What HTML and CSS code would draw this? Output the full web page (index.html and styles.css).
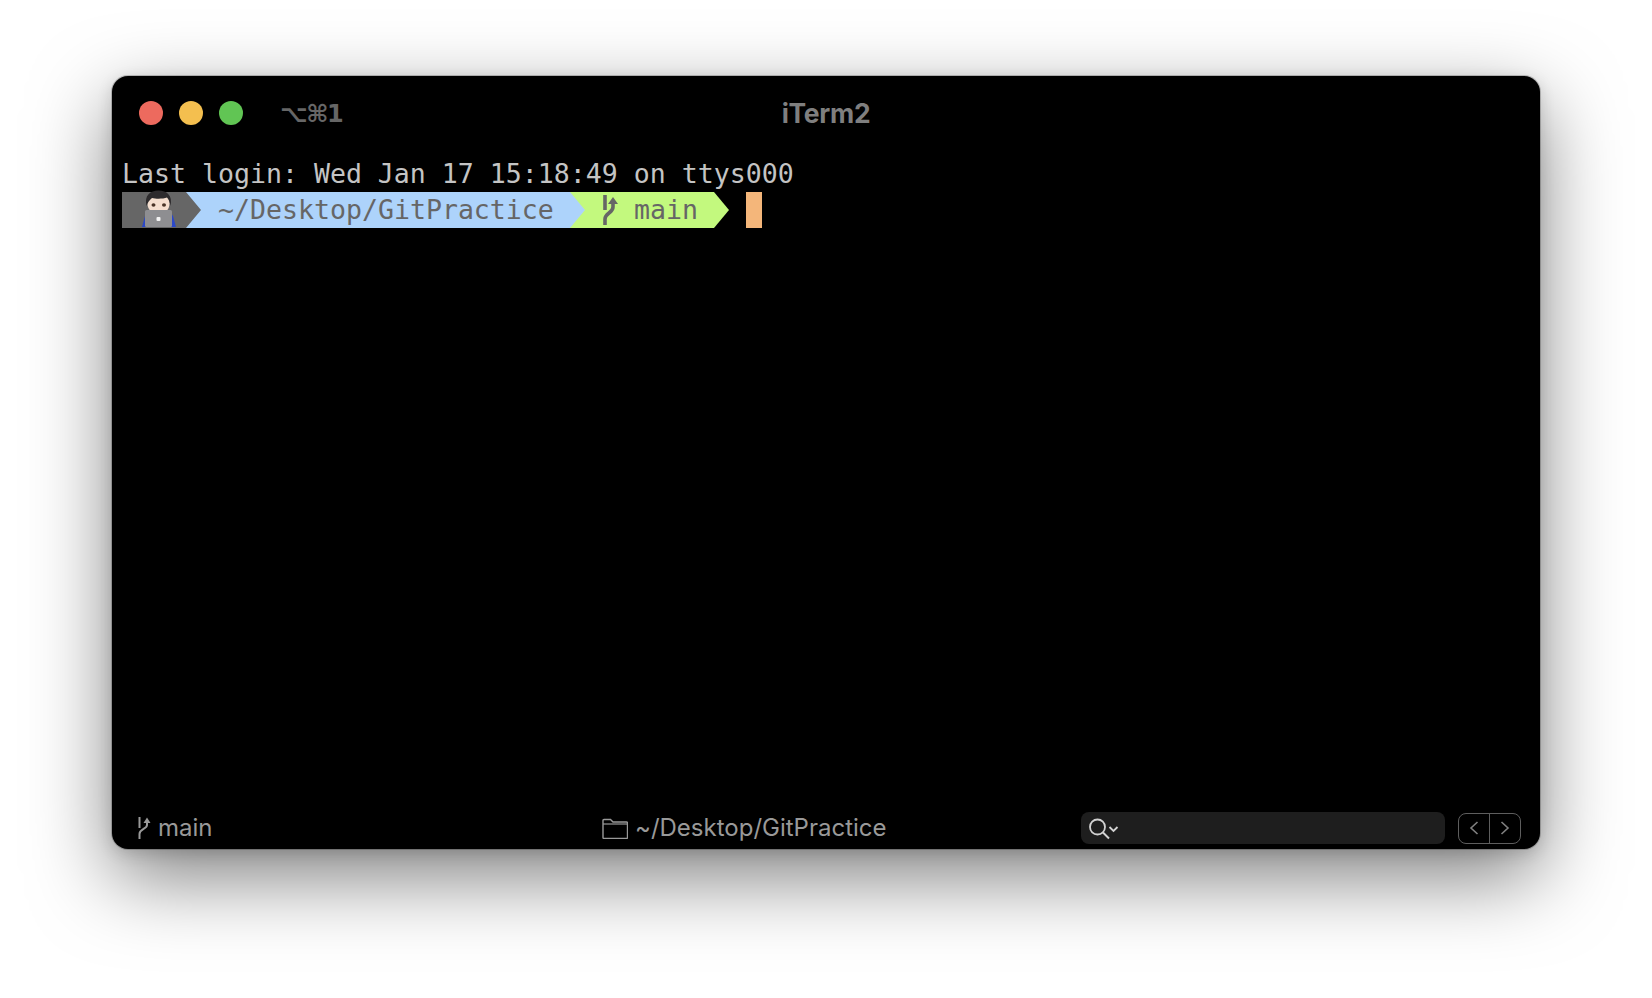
FILE: index.html
```html
<!DOCTYPE html>
<html lang="en">
<head>
<meta charset="utf-8">
<title>iTerm2</title>
<link rel="stylesheet" href="styles.css">
</head>
<body>
<main class="window">
  <header class="titlebar">
    <div class="lights"><span class="light red"></span><span class="light yellow"></span><span class="light green"></span></div>
    <span class="shortcut">⌥⌘1</span>
    <span class="title">iTerm2</span>
  </header>
  <section class="terminal">
    <div class="line">Last login: Wed Jan 17 15:18:49 on ttys000</div>
    <div class="prompt">
      <div class="seg seg-user">
        <svg class="avatar" width="38" height="38" viewBox="0 0 38 38">
          <path d="M2 37l3-11 4-6h20l4 6 3 11z" fill="#2b48c8"/>
          <path d="M9 22h20v6H9z" fill="#4a4a4c"/>
          <ellipse cx="18.500" cy="13.500" rx="11" ry="11" fill="#f5dfcf"/>
          <path d="M6.500 16C4 5 10.500 .5 18.500 .5S33 5 30.500 16c-.5-3.500-1.500-6.500-3.500-8.500-4 1.500-11 1.500-15 .5-2 1.500-4.500 4.500-5.500 8z" fill="#2d2b2d"/>
          <ellipse cx="13.500" cy="15" rx="2" ry="1.800" fill="#4a3528"/>
          <ellipse cx="24" cy="15" rx="2" ry="1.800" fill="#4a3528"/>
          <rect x="5" y="20" width="27" height="17" rx="1.500" fill="#8e8e91"/>
          <rect x="16.500" y="27" width="4" height="4" rx="1" fill="#f4f4f4"/>
        </svg>
      </div>
      <div class="seg seg-path">~/Desktop/GitPractice</div>
      <div class="seg seg-git">
        <svg class="branch" width="16" height="32" viewBox="0 0 16 32">
          <path d="M3 1v15M11 9v4c0 6-8 6-8 12v6" fill="none" stroke="#666" stroke-width="3.600"/>
          <path d="M11 3l5 7H6z" fill="#666"/>
        </svg>
        <span>main</span>
      </div>
      <span class="cursor"></span>
    </div>
  </section>
  <footer class="status">
    <div class="status-branch">
      <svg width="15" height="24" viewBox="0 0 15 24">
        <path d="M2.500 1v11M10 6v3c0 4-7.500 4-7.500 9v5" fill="none" stroke="#999" stroke-width="2"/>
        <path d="M10 1.500l3.500 5.500h-7z" fill="#999"/>
      </svg>
      <span>main</span>
    </div>
    <div class="status-path">
      <svg width="26" height="21" viewBox="0 0 26 21">
        <path d="M1 19.500V2.500q0-1 1-1h6.500l2.500 2.500h13.500q1 0 1 1v14.500q0 1-1 1H2q-1 0-1-1z" fill="none" stroke="#999" stroke-width="1.400"/>
        <path d="M1 6h24.500" stroke="#999" stroke-width="1.200"/>
      </svg>
      <span>~/Desktop/GitPractice</span>
    </div>
    <div class="search">
      <svg width="34" height="24" viewBox="0 0 34 24">
        <circle cx="9.500" cy="10" r="7.500" fill="none" stroke="#d2d2d2" stroke-width="1.800"/>
        <path d="M15 15.500l6 6" stroke="#d2d2d2" stroke-width="2"/>
        <path d="M21.500 10l4 4 4-4" fill="none" stroke="#d2d2d2" stroke-width="1.800"/>
      </svg>
    </div>
    <div class="nav">
      <span class="nav-btn"><svg width="12" height="16" viewBox="0 0 12 16"><path d="M9.500 2L3 8l6.500 6" fill="none" stroke="#808080" stroke-width="1.600"/></svg></span>
      <span class="nav-btn divided"><svg width="12" height="16" viewBox="0 0 12 16"><path d="M2.500 2L9 8l-6.500 6" fill="none" stroke="#808080" stroke-width="1.600"/></svg></span>
    </div>
  </footer>
</main>
</body>
</html>
```
FILE: styles.css
```css
* { box-sizing: border-box; }
html, body { margin: 0; height: 100%; }
body {
  background: #fff;
  padding: 76px 0 0 112px;
  overflow: hidden;
  font-family: "Inter", "Liberation Sans", sans-serif;
}
.window {
  width: 1428px;
  height: 773px;
  background: #000;
  border-radius: 16px;
  display: flex;
  flex-direction: column;
  box-shadow: 0 0 0 1px rgba(0,0,0,.2), 0 28px 80px rgba(0,0,0,.5), 0 4px 16px rgba(0,0,0,.14);
}
.titlebar {
  position: relative;
  height: 74px;
  flex: none;
  display: flex;
  align-items: center;
  padding-left: 27px;
}
.lights { display: flex; gap: 16px; }
.light { width: 24px; height: 24px; border-radius: 50%; }
.red { background: #ed6a5e; }
.yellow { background: #f4bf4f; }
.green { background: #61c554; }
.shortcut {
  margin: 2px 0 0 37px;
  font-family: "DejaVu Sans", sans-serif;
  font-weight: 700;
  font-size: 24px;
  letter-spacing: -1.500px;
  color: #666;
}
.title {
  position: absolute;
  left: 0;
  right: 0;
  text-align: center;
  font-weight: 700;
  font-size: 26.500px;
  letter-spacing: -.3px;
  color: #7f7f7f;
}
.terminal {
  margin-top: 6px;
  padding-left: 10px;
  font-family: "DejaVu Sans Mono", monospace;
  font-size: 26.570px;
  line-height: 36px;
  color: #c4c4c4;
}
.line { height: 36px; white-space: pre; }
.prompt { display: flex; height: 36px; color: #666; }
.seg {
  position: relative;
  height: 36px;
  flex: none;
  margin-right: -15px;
}
.seg-user {
  width: 79px;
  background: #666;
  z-index: 3;
  clip-path: polygon(0 -4px, 64px -4px, 64px 0, 100% 50%, 64px 100%, 0 100%);
}
.avatar { position: absolute; left: 18px; top: -2px; }
.seg-path {
  width: 399px;
  padding-left: 32px;
  background: #add3fb;
  z-index: 2;
  clip-path: polygon(0 0, 384px 0, 100% 50%, 384px 100%, 0 100%);
}
.seg-git {
  width: 159px;
  background: #c3f97e;
  z-index: 1;
  display: flex;
  padding-left: 32px;
  clip-path: polygon(0 0, 144px 0, 100% 50%, 144px 100%, 0 100%);
}
.branch { margin-top: 2px; }
.seg-git span { margin-left: 16px; }
.cursor {
  width: 16px;
  height: 36px;
  margin-left: 32px;
  background: #f4b67a;
  flex: none;
}
.status {
  margin-top: auto;
  margin-bottom: 5px;
  height: 32px;
  padding-left: 25px;
  display: flex;
  align-items: center;
  font-size: 24px;
  line-height: 28px;
  color: #999;
}
.status-branch { width: 464px; display: flex; align-items: center; gap: 6px; }
.status-path { width: 480px; display: flex; align-items: center; gap: 8px; }
.status-path svg { margin-left: 1px; margin-right: -1px; }
.search {
  width: 364px;
  height: 32px;
  background: #1e1e1e;
  border-radius: 8px;
  padding: 5px 0 0 7px;
  display: flex;
}
.nav {
  margin-left: 13px;
  width: 63px;
  height: 31px;
  border: 1.500px solid #5e5e5e;
  border-radius: 8px;
  display: flex;
}
.nav-btn { flex: 1; display: flex; align-items: center; justify-content: center; }
.divided { border-left: 1.500px solid #5e5e5e; }
```
